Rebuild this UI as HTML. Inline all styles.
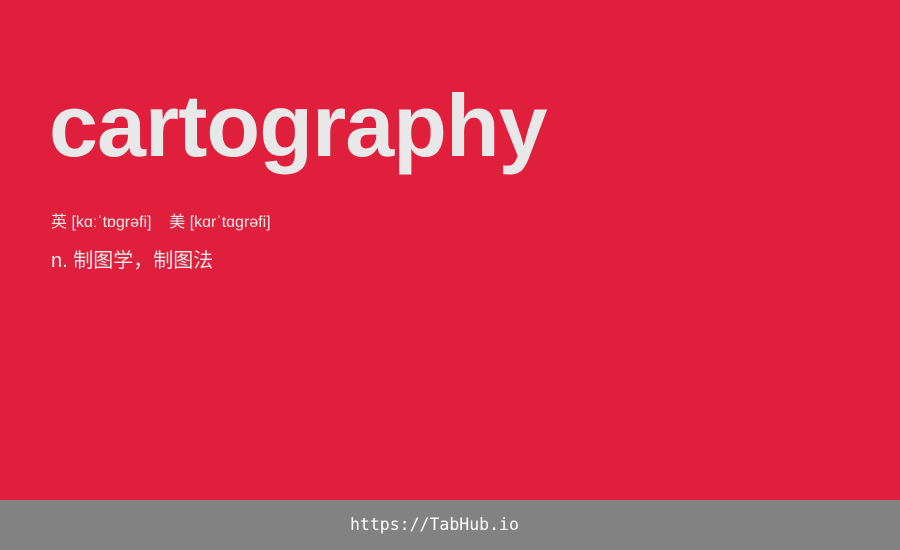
<!DOCTYPE html>
<html><head><meta charset="utf-8"><style>
html,body{margin:0;padding:0}
body{width:900px;height:550px;position:relative;background:#e01f3d;overflow:hidden;font-family:"Liberation Sans","Noto Sans CJK SC",sans-serif;color:#e8e8e8}
.t{position:absolute;left:49px;top:76px;font-size:88px;font-weight:bold;letter-spacing:-1px;line-height:100px;color:#e8e8e8}
.p{position:absolute;left:51px;top:212px;font-size:16px;line-height:22px;white-space:nowrap}
.m{position:absolute;left:51px;top:247px;font-size:20px;line-height:28px;white-space:nowrap}
.f{position:absolute;left:0;top:500px;width:900px;height:50px;background:#828282}
.f span{position:absolute;left:350px;top:0;color:#fff;font-family:"DejaVu Sans Mono","Liberation Mono",monospace;font-size:16.5px;line-height:50px}
</style></head><body>
<div class="t">cartography</div>
<div class="p">英 [kɑːˈtɒɡrəfi]&nbsp;&nbsp;&nbsp;&nbsp;美 [kɑrˈtɑɡrəfi]</div>
<div class="m">n. 制图学，制图法</div>
<div class="f"><span>https://TabHub.io</span></div>
</body></html>
